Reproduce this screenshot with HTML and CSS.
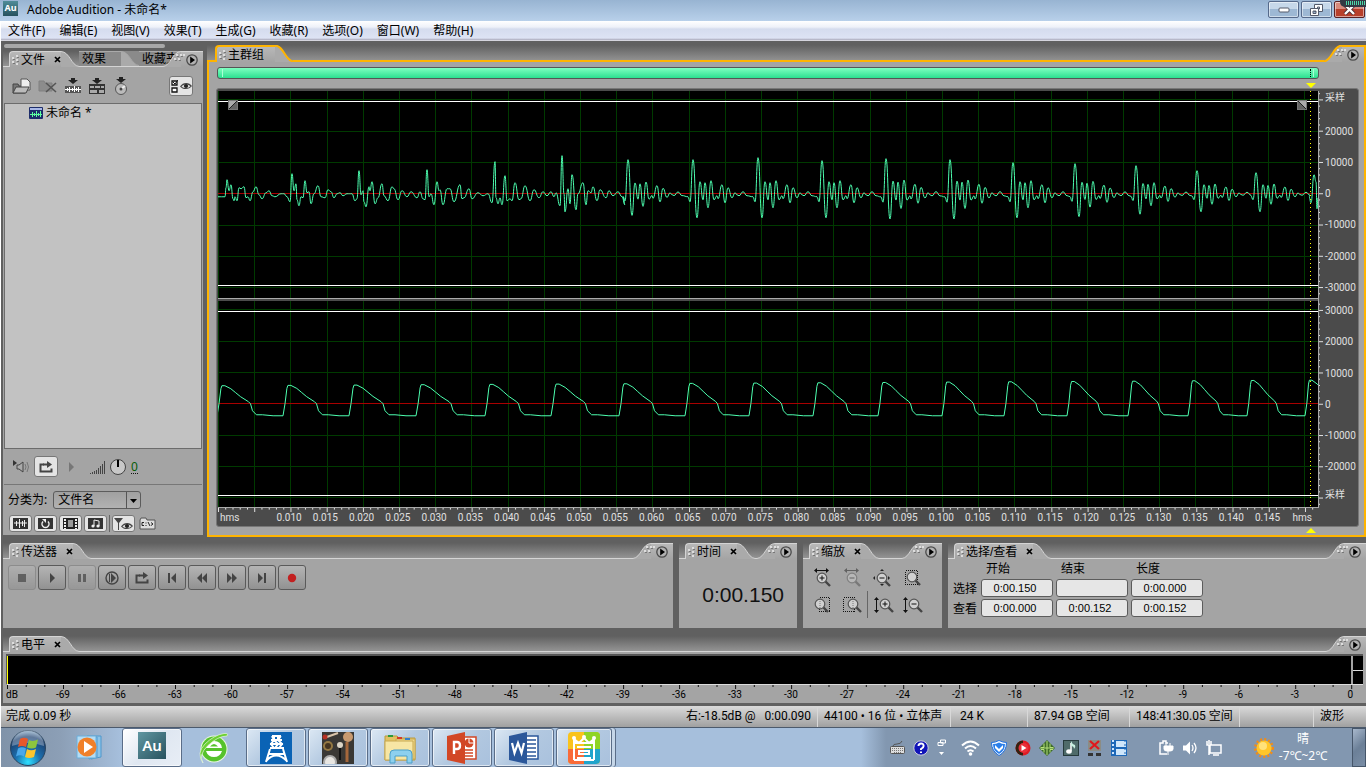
FILE: index.html
```html
<!DOCTYPE html>
<html lang="zh-CN">
<head>
    <meta charset="UTF-8">
    <meta name="viewport" content="width=device-width, initial-scale=1.0">
    <title>Adobe Audition - 未命名*</title>
    <link rel="stylesheet" href="styles.css">
</head>
<body>
    <!-- Shared icons -->
    <svg class="sprite" aria-hidden="true">
        <symbol id="grip" viewBox="0 0 7 12">
            <path d="M0 3h2v2h-2zM0 7h2v2h-2zM4 1h2v2h-2zM4 5h2v2h-2zM4 9h2v2h-2z" fill="#ddd"/>
            <path d="M1 5h2v1h-2zM1 9h2v1h-2zM5 3h2v1h-2zM5 7h2v1h-2z" fill="#777"/>
        </symbol>
        <symbol id="grip-wide" viewBox="0 0 12 7">
            <path d="M3 0h2v2h-2zM7 0h2v2h-2zM1 4h2v2h-2zM5 4h2v2h-2zM10 0h2v2h-2z" fill="#ddd"/>
            <path d="M4 2h2v1h-2zM8 2h2v1h-2zM2 6h2v1h-2zM6 6h2v1h-2z" fill="#777"/>
        </symbol>
        <symbol id="panel-menu" viewBox="0 0 12 12">
            <circle cx="6" cy="6" r="5.2" fill="#b2b2b2" stroke="#4b4b4b" stroke-width="1.3"/>
            <path d="M4.2 2.6L9 6L4.2 9.4z" fill="#000"/>
        </symbol>
        <symbol id="slope" viewBox="0 0 18 17" preserveAspectRatio="none">
            <path class="slope-fill" d="M0 0.5C9 1 10 15.5 18 16.5V17H0z"/>
            <path class="slope-line" d="M0 0.5C9 1 10 15.5 18 16.5"/>
        </symbol>
        <symbol id="close" viewBox="0 0 7 7">
            <path d="M1 1L6 6M6 1L1 6" stroke="#000" stroke-width="1.7"/>
        </symbol>
        <symbol id="eye" viewBox="0 0 12 8">
            <path d="M0 4.5C3 0 9 0 12 4C9 8 3 8 0 4.5z" fill="#444"/>
            <path d="M1.5 4.5C4 2 8 2 10.5 4.2C8 6.6 4 6.6 1.5 4.5z" fill="#ddd"/>
            <circle cx="6" cy="4" r="2.1" fill="#222"/>
        </symbol>
        <symbol id="loop" viewBox="0 0 14 12">
            <path d="M5 3.5H1.5V10.5H12.5V7.5" fill="none" stroke="currentColor" stroke-width="2"/>
            <path d="M4 3.5H9" stroke="currentColor" stroke-width="2"/>
            <path d="M8 0L13 3.5L8 7z" fill="currentColor"/>
        </symbol>
        <symbol id="lens" viewBox="0 0 16 16">
            <path d="M10 10L15 15" stroke="#444" stroke-width="2.4"/>
            <circle cx="7" cy="7" r="4.8" fill="#d0d0d0" stroke="#555" stroke-width="1.2"/>
        </symbol>
    </svg>

    <!-- Right end of every panel header -->
    <template id="head-end">
        <svg class="slope flip"><use href="#slope"/></svg>
        <span class="corner"><svg class="grip-wide"><use href="#grip-wide"/></svg><button aria-label="面板菜单"><svg class="menu-dot"><use href="#panel-menu"/></svg></button></span>
    </template>

    <!-- Title Bar -->
    <header class="titlebar">
        <span class="app-icon">Au</span>
        <h1>Adobe Audition - 未命名*</h1>
        <div class="window-buttons">
            <button aria-label="最小化"><svg width="12" height="6" viewBox="0 0 12 6"><rect x="1" y="1" width="10" height="4" rx="1" fill="#fff" stroke="#555b6b"/></svg></button>
            <button aria-label="还原"><svg width="13" height="12" viewBox="0 0 13 12"><g fill="#fff" stroke="#555b6b"><path d="M4.500 .5h8v7h-8zM7.500 3v2h2v-2z"/><path d="M.5 4.500h8v7h-8zM3 7v2.500h3V7z" fill-rule="evenodd"/></g></svg></button>
            <button class="close-window" aria-label="关闭"><svg width="13" height="11" viewBox="0 0 13 11"><path d="M2 1L11 10M11 1L2 10" stroke="#503038" stroke-width="4"/><path d="M2 1L11 10M11 1L2 10" stroke="#fff" stroke-width="2.400"/></svg></button>
        </div>
        <div class="meter-overlay"></div>
    </header>

    <!-- Menu -->
    <nav class="menubar">
        <a href="#">文件(F)</a>
        <a href="#">编辑(E)</a>
        <a href="#">视图(V)</a>
        <a href="#">效果(T)</a>
        <a href="#">生成(G)</a>
        <a href="#">收藏(R)</a>
        <a href="#">选项(O)</a>
        <a href="#">窗口(W)</a>
        <a href="#">帮助(H)</a>
    </nav>

    <main class="workspace">
        <div class="upper">
            <!-- Files Panel -->
            <section class="files">
                <div class="tab-scroll"></div>
                <div class="panel-head">
                    <span class="lead"></span>
                    <span class="tab"><svg class="grip"><use href="#grip"/></svg>文件<svg class="close"><use href="#close"/></svg></span>
                    <svg class="slope"><use href="#slope"/></svg>
                    <span class="tab back">效果</span>
                    <svg class="slope back"><use href="#slope"/></svg>
                    <span class="tab back cut">收藏夹</span>
                </div>
                <div class="panel-body">
                    <div class="file-tools">
                        <button aria-label="导入文件"><svg width="20" height="18" viewBox="0 0 20 18"><path d="M1 16V7h5l1 2h6v7z" fill="#777" stroke="#444"/><path d="M9 2h6l3 3v8H9z" fill="#eee" stroke="#555"/><path d="M1 16l3-6h13l-3 6z" fill="#bbb" stroke="#444"/></svg></button>
                        <button aria-label="关闭文件"><svg width="20" height="18" viewBox="0 0 20 18"><path d="M1 14V4h5l1 2h7v8z" fill="#8c8c8c" stroke="#808080"/><path d="M8 6L18 15M18 6L8 15" stroke="#555" stroke-width="1.600"/></svg></button>
                        <button aria-label="插入到多轨"><svg width="18" height="18" viewBox="0 0 18 18"><path d="M7 1h4v2h3l-5 4-5-4h3z" fill="#222"/><path d="M1 9h16v7H1z" fill="#555"/><path d="M1 12.500h16M3.500 11v3M5.500 10v5M8.500 11v3M10.500 9v6M12.500 11v3M14.500 10v5" stroke="#fff" fill="none"/></svg></button>
                        <button aria-label="插入到 CD"><svg width="18" height="18" viewBox="0 0 18 18"><path d="M7 1h4v2h3l-5 4-5-4h3z" fill="#222"/><rect x="1" y="7" width="16" height="10" fill="#333"/><path d="M2 9h4v2h-4zM7 9h5v2h-5zM13 9h3v2h-3zM2 13h7v3h-7zM11 13h5v3h-5z" fill="#aaa"/></svg></button>
                        <button aria-label="刻录"><svg width="18" height="18" viewBox="0 0 18 18"><circle cx="9" cy="12" r="5.500" fill="#bbb" stroke="#555"/><path d="M9 12l4-3" stroke="#eee" stroke-width="2"/><circle cx="9" cy="12" r="1.500" fill="#444"/><path d="M7 0h4v2h3l-5 4-5-4h3z" fill="#222"/></svg></button>
                        <button class="lit options" aria-label="高级选项"><svg width="7" height="15" viewBox="0 0 7 15"><path d="M1 2h5v4h-5zM1 9h5v4h-5z" fill="#fff" stroke="#111" stroke-width="1.300"/><path d="M2 3l2 2 3-4" stroke="#111" fill="none"/></svg><svg width="12" height="8"><use href="#eye"/></svg></button>
                    </div>
                    <ul class="file-list">
                        <li><svg width="14" height="12" viewBox="0 0 14 12"><rect width="14" height="12" rx="1" fill="#1d2d6a"/><rect x="1" y="1" width="12" height="2" fill="#a8b8e8"/><path d="M1 7.500h12M3.500 5v5M5.500 6v3M7.500 4v6M9.500 6v3M11.500 4v6" stroke="#5dffa0" fill="none"/></svg>未命名 *</li>
                    </ul>
                    <div class="preview">
                        <button aria-label="播放"><svg width="18" height="14" viewBox="0 0 18 14"><path d="M1 0v6l4-3z" fill="#333"/><path d="M5 5h2l4-3v10l-4-3h-2z" fill="#aaa" stroke="#444"/><path d="M13 4q2 3 0 6M15 2q3 5 0 10" fill="none" stroke="#777"/></svg></button>
                        <button class="lit" aria-label="循环播放"><svg width="14" height="12"><use href="#loop"/></svg></button>
                        <svg class="dim-play" width="7" height="10" viewBox="0 0 7 10"><path d="M1 0L6 5L1 10z" fill="#777"/></svg>
                        <svg width="16" height="14" viewBox="0 0 16 14"><path d="M1.500 14v-1M3.500 14v-2M5.500 14v-3M7.500 14v-4M9.500 14v-6M11.500 14v-8M13.500 14v-10M15.500 14v-13" stroke="#444" shape-rendering="crispEdges"/></svg>
                        <svg width="18" height="18" viewBox="0 0 18 18"><circle cx="9" cy="9" r="7.500" fill="#c8c8c8" stroke="#444"/><path d="M9 2v7" stroke="#000" stroke-width="2"/></svg>
                        <a class="volume" href="#">0</a>
                    </div>
                    <div class="sort">
                        <label for="sort-by">分类为:</label>
                        <div class="select-box">
                            <select id="sort-by"><option>文件名</option></select>
                            <svg width="14" height="17" viewBox="0 0 14 17"><path d="M.5 0v17" stroke="#555"/><path d="M4 7h7l-3.500 4z" fill="#000"/></svg>
                        </div>
                    </div>
                    <div class="filters">
                        <button class="lit" aria-label="音频"><svg width="15" height="11" viewBox="0 0 15 11"><rect width="15" height="11" fill="#333"/><path d="M1 5h13M3.500 3v5M6.500 1v9M9.500 3v5M11.500 2v7" stroke="#eee"/></svg></button>
                        <button class="lit" aria-label="循环"><svg width="15" height="11" viewBox="0 0 15 11"><rect width="15" height="11" fill="#333"/><path d="M5 3.500a3.500 3.500 0 1 0 5 0" fill="none" stroke="#eee" stroke-width="1.500"/><path d="M4 1h4v4z" fill="#eee"/></svg></button>
                        <button class="lit" aria-label="视频"><svg width="15" height="11" viewBox="0 0 15 11"><rect width="15" height="11" fill="#222"/><rect x="5" y="2" width="5" height="7" fill="#999"/><path d="M2 1v10M13 1v10" stroke="#eee" stroke-width="2" stroke-dasharray="2 1"/></svg></button>
                        <button class="lit" aria-label="MIDI"><svg width="15" height="11" viewBox="0 0 15 11"><rect width="15" height="11" fill="#333"/><path d="M6 8V2l5 1v5" fill="none" stroke="#eee"/><circle cx="5" cy="8" r="1.600" fill="#eee"/><circle cx="10" cy="8" r="1.600" fill="#eee"/></svg></button>
                        <span class="divider"></span>
                        <button class="lit" aria-label="显示"><svg width="19" height="14" viewBox="0 0 19 14"><path d="M0 1h9l-4 5v7h-1v-7z" fill="#444"/><use href="#eye" x="7" y="5" width="12" height="8"/></svg></button>
                        <button class="path-button" aria-label="完整路径"><svg width="17" height="13" viewBox="0 0 17 13"><path d="M1 12V3l1-2h5l1 2h8v9z" fill="#ddd" stroke="#555"/><path d="M5 5.500h-2v3h2M7 5.500v1M7 8v1M9 5l2 4M12 5.500l2 1.500-2 1.500" stroke="#222" fill="none"/></svg></button>
                    </div>
                </div>
            </section>

            <!-- Main Panel -->
            <section class="main-panel">
                <div class="panel-head">
                    <span class="lead"></span>
                    <span class="tab"><svg class="grip"><use href="#grip"/></svg>主群组</span>
                    <svg class="slope"><use href="#slope"/></svg>
                    <span class="filler"></span>
                </div>
                <div class="panel-body">
                    <div class="view-bar"><span></span><span class="end"></span></div>
                    <div class="playhead-row"><svg width="10" height="5" viewBox="0 0 10 5"><path d="M0 0h10l-5 5z" fill="#ff0"/></svg></div>
                    <div class="display">
                        <div class="channels">
                            <div class="channel">
                                <svg id="wave-left" viewBox="0 0 1100 206" preserveAspectRatio="none"></svg>
                                <svg class="fade in" width="10" height="10" viewBox="0 0 10 10"><rect x=".5" y=".5" width="9" height="9" fill="#666" stroke="#777"/><path d="M1 1h8l-8 8z" fill="#aaa"/><path d="M1 9l8-8" stroke="#222"/></svg>
                                <svg class="fade out" width="10" height="10" viewBox="0 0 10 10"><rect x=".5" y=".5" width="9" height="9" fill="#666" stroke="#777"/><path d="M1 1h8v8z" fill="#aaa"/><path d="M1 1l8 8" stroke="#222"/></svg>
                            </div>
                            <div class="channel">
                                <svg id="wave-right" viewBox="0 0 1100 206" preserveAspectRatio="none"></svg>
                            </div>
                        </div>
                        <div class="amplitude">
                            <svg id="amp-ticks" viewBox="0 0 6 416" preserveAspectRatio="none"></svg>
                            <div class="amp-labels" id="amp-labels"></div>
                        </div>
                        <div class="time-ruler">
                            <svg id="time-ticks" viewBox="0 0 1100 5" preserveAspectRatio="none"></svg>
                            <div class="time-labels" id="time-labels"></div>
                        </div>
                    </div>
                    <div class="playhead-row"><svg width="10" height="5" viewBox="0 0 10 5"><path d="M0 5h10l-5-5z" fill="#ff0"/></svg></div>
                </div>
            </section>
        </div>

        <div class="lower">
            <!-- Transport -->
            <section class="transport">
                <div class="panel-head">
                    <span class="lead"></span>
                    <span class="tab"><svg class="grip"><use href="#grip"/></svg>传送器<svg class="close"><use href="#close"/></svg></span>
                    <svg class="slope"><use href="#slope"/></svg>
                    <span class="filler"></span>
                </div>
                <div class="panel-body transport-buttons">
                    <button disabled aria-label="停止"><svg viewBox="0 0 16 14"><path d="M4 3h8v8h-8z"/></svg></button>
                    <button aria-label="播放"><svg viewBox="0 0 16 14"><path d="M6 2l5 5-5 5z"/></svg></button>
                    <button disabled aria-label="暂停"><svg viewBox="0 0 16 14"><path d="M4 3h3v8h-3zM9 3h3v8h-3z"/></svg></button>
                    <button aria-label="播放到结尾"><svg viewBox="0 0 16 14"><circle cx="8" cy="7" r="6" fill="none" stroke="#444" stroke-width="1.400"/><path d="M5 3h1v8h-1zM7 2l5 5-5 5z"/></svg></button>
                    <button aria-label="循环播放"><svg viewBox="0 0 16 14"><use href="#loop" x="1" y="1" width="14" height="12"/></svg></button>
                    <button aria-label="到开头"><svg viewBox="0 0 16 14"><path d="M4 2h2v10h-2zM12 2v10l-5-5z"/></svg></button>
                    <button aria-label="倒放"><svg viewBox="0 0 16 14"><path d="M8 2v10l-5-5zM13 2v10l-5-5z"/></svg></button>
                    <button aria-label="快进"><svg viewBox="0 0 16 14"><path d="M3 2v10l5-5zM8 2v10l5-5z"/></svg></button>
                    <button aria-label="到结尾"><svg viewBox="0 0 16 14"><path d="M4 2v10l5-5zM10 2h2v10h-2z"/></svg></button>
                    <button class="record" aria-label="录音"><svg viewBox="0 0 16 14"><circle cx="8" cy="7" r="4.200"/></svg></button>
                </div>
            </section>

            <!-- Time -->
            <section class="time">
                <div class="panel-head">
                    <span class="lead"></span>
                    <span class="tab"><svg class="grip"><use href="#grip"/></svg>时间<svg class="close"><use href="#close"/></svg></span>
                    <svg class="slope"><use href="#slope"/></svg>
                    <span class="filler"></span>
                </div>
                <div class="panel-body clock">0:00.150</div>
            </section>

            <!-- Zoom -->
            <section class="zoom">
                <div class="panel-head">
                    <span class="lead"></span>
                    <span class="tab"><svg class="grip"><use href="#grip"/></svg>缩放<svg class="close"><use href="#close"/></svg></span>
                    <svg class="slope"><use href="#slope"/></svg>
                    <span class="filler"></span>
                </div>
                <div class="panel-body zoom-buttons">
                    <button aria-label="水平放大"><svg viewBox="0 0 18 18"><use href="#lens" x="2" y="2" width="16" height="16"/><path d="M6.500 9h5M9 6.500v5" stroke="#111"/><path d="M2 1.500h13" stroke="#111"/><path d="M4 -1v5l-3-2.500zM13 -1v5l3-2.500z" fill="#111"/></svg></button>
                    <button disabled aria-label="水平缩小"><svg viewBox="0 0 18 18"><use href="#lens" x="2" y="2" width="16" height="16"/><path d="M6.500 9h5" stroke="#111"/><path d="M2 1.500h13" stroke="#111"/><path d="M4 -1v5l-3-2.500zM13 -1v5l3-2.500z" fill="#111"/></svg></button>
                    <button aria-label="全部缩小"><svg viewBox="0 0 18 18"><use href="#lens" x="2" y="2" width="16" height="16"/><path d="M6.500 9h5" stroke="#111"/><path d="M7 2l2-2 2 2zM7 15l2 2 2-2zM2 7l-2 2 2 2zM15 7l2 2-2 2z" fill="#222"/></svg></button>
                    <button aria-label="缩放到选区"><svg viewBox="0 0 18 18"><rect x="2.500" y="1.500" width="12" height="14" fill="none" stroke="#111" stroke-dasharray="1 1" shape-rendering="crispEdges"/><use href="#lens" x="2" y="1" width="16" height="16"/></svg></button>
                    <button aria-label="缩放到选区左侧"><svg viewBox="0 0 18 18"><rect x="6.500" y="1.500" width="10" height="14" fill="none" stroke="#111" stroke-dasharray="1 1" shape-rendering="crispEdges"/><use href="#lens" x="0" y="1" width="16" height="16"/><path d="M7 5v7" stroke="#777" stroke-dasharray="1 1"/></svg></button>
                    <button aria-label="缩放到选区右侧"><svg viewBox="0 0 18 18"><rect x="0.500" y="1.500" width="11" height="14" fill="none" stroke="#111" stroke-dasharray="1 1" shape-rendering="crispEdges"/><use href="#lens" x="3" y="1" width="16" height="16"/><path d="M10 5v7" stroke="#777" stroke-dasharray="1 1"/></svg></button>
                    <button class="split" aria-label="垂直放大"><svg viewBox="0 0 18 18"><use href="#lens" x="4" y="1" width="16" height="16"/><path d="M8.500 8h5M11 5.500v5M2.500 3v12" stroke="#111"/><path d="M0 4l2.500-3L5 4zM0 14l2.500 3L5 14z" fill="#111"/></svg></button>
                    <button class="wide" aria-label="垂直缩小"><svg viewBox="0 0 18 18"><use href="#lens" x="4" y="1" width="16" height="16"/><path d="M8.500 8h5M2.500 3v12" stroke="#111"/><path d="M0 4l2.500-3L5 4zM0 14l2.500 3L5 14z" fill="#111"/></svg></button>
                </div>
            </section>

            <!-- Selection / View -->
            <section class="selection">
                <div class="panel-head">
                    <span class="lead"></span>
                    <span class="tab"><svg class="grip"><use href="#grip"/></svg>选择/查看<svg class="close"><use href="#close"/></svg></span>
                    <svg class="slope"><use href="#slope"/></svg>
                    <span class="filler"></span>
                </div>
                <div class="panel-body">
                    <table>
                        <tr><td></td><th id="c1">开始</th><th id="c2">结束</th><th id="c3">长度</th></tr>
                        <tr><th id="r1">选择</th><td><input aria-labelledby="r1 c1" value="0:00.150"></td><td><input aria-labelledby="r1 c2" value=""></td><td><input aria-labelledby="r1 c3" value="0:00.000"></td></tr>
                        <tr><th id="r2">查看</th><td><input aria-labelledby="r2 c1" value="0:00.000"></td><td><input aria-labelledby="r2 c2" value="0:00.152"></td><td><input aria-labelledby="r2 c3" value="0:00.152"></td></tr>
                    </table>
                </div>
            </section>
        </div>

        <!-- Levels -->
        <section class="levels">
            <div class="panel-head">
                <span class="lead"></span>
                <span class="tab"><svg class="grip"><use href="#grip"/></svg>电平<svg class="close"><use href="#close"/></svg></span>
                <svg class="slope"><use href="#slope"/></svg>
                <span class="filler"></span>
            </div>
            <div class="panel-body">
                <div class="meter"><div class="bars"></div><div class="clip"><span></span><span></span></div></div>
                <svg id="db-ticks" viewBox="0 0 1357 4" preserveAspectRatio="none"></svg>
                <div class="db-labels" id="db-labels"></div>
            </div>
        </section>
    </main>

    <!-- Status Bar -->
    <footer class="statusbar">
        <span class="done">完成 0.09 秒</span>
        <span class="level">右:-18.5dB @ &nbsp; 0:00.090</span>
        <span class="format">44100 • 16 位 • 立体声</span>
        <span class="size">24 K</span>
        <span class="space">87.94 GB 空间</span>
        <span class="remain">148:41:30.05 空间</span>
        <span class="empty"></span>
        <span class="mode">波形</span>
    </footer>

    <!-- Taskbar -->
    <div class="taskbar">
        <button class="start" aria-label="开始"><svg width="38" height="38" viewBox="0 0 38 38"><defs><radialGradient id="orb" cx=".5" cy=".9" r=".9"><stop offset="0" stop-color="#2fe0ff"/><stop offset=".4" stop-color="#1b6fae"/><stop offset=".8" stop-color="#1c3f6e"/><stop offset="1" stop-color="#8fb0cc"/></radialGradient></defs><circle cx="19" cy="19" r="17.500" fill="url(#orb)" stroke="#2a4560"/><path d="M3 17a16 16 0 0 1 32 0q-16-6-32 0z" fill="#fff" opacity=".3"/><path d="M11 10q4-2.500 8 0l-2 8q-4-2-8 0z" fill="#e8582a"/><path d="M20 11q4 2 9-.5l-2 8q-4 2-9 0z" fill="#8cc63e"/><path d="M9 19.500q4-2.500 8 0l-2 8q-4-2.500-8 0z" fill="#4aa8ea"/><path d="M18 20q4 2.500 9 0l-2 8q-5 2-9 0z" fill="#fbc52d"/></svg></button>
        <button aria-label="媒体播放器"><svg width="30" height="28" viewBox="0 0 30 28"><path d="M12 2h14v21l-10 2zM8 3h14v20l-8 2z" fill="#8cc4ea" stroke="#4e98cc"/><path d="M2 2h19v22H2z" fill="#b4dcf4" stroke="#6aaedb"/><circle cx="12" cy="13" r="9.500" fill="#f0802a"/><path d="M9 7l9 6-9 6z" fill="#fff"/></svg></button>
        <button class="running active" aria-label="Adobe Audition"><span class="au">Au</span></button>
        <button aria-label="浏览器"><svg width="32" height="32" viewBox="0 0 32 32"><circle cx="16" cy="17" r="13.500" fill="#e8f6e0"/><circle cx="16" cy="17" r="12.500" fill="#56c22c"/><path d="M8 16q1-7 8-7t8 7zM8 19h16q-2 6-8 6t-8-6" fill="#fff"/><path d="M12 14.500q4-5 8 0z" fill="#56c22c"/><path d="M5 31q-5-8 5-17.500T29 4q2-3-3-2.500Q16 3 7 12T5 31z" fill="#6cd033" stroke="#e8f6e0" stroke-width=".7"/></svg></button>
        <button class="running" aria-label="磁力塔"><svg width="32" height="32" viewBox="0 0 32 32"><rect width="32" height="32" fill="#0a63b5"/><path d="M12 4h9M11 8h11M10 12h13M10 16h14M12 4l2 4-3 4 3 4M21 4l-3 4 4 4-3 4M14 8l4 4-3 4M14 4v4M18 4v4M10 17l-4 13M23 17l4 13M6 29q10-11 21 0M9 22h16" fill="none" stroke="#fff" stroke-width="2"/></svg></button>
        <button class="running" aria-label="图片"><svg width="32" height="32" viewBox="0 0 32 32"><rect width="32" height="32" fill="#3a3835"/><path d="M2 6l14-5" stroke="#d9c4aa" stroke-width="2"/><circle cx="3" cy="5" r="2.500" fill="#b53024"/><circle cx="26" cy="5" r="5" fill="#c89a70"/><path d="M25 10v20" stroke="#a5673b" stroke-width="3"/><circle cx="6" cy="14" r="5" fill="#947842"/><circle cx="6" cy="14" r="3" fill="#443420"/><circle cx="18" cy="13" r="3" fill="#dcd5c6"/><path d="M18 16v12" stroke="#111" stroke-width="2"/><circle cx="8" cy="30" r="7" fill="#aaa"/><circle cx="8" cy="30" r="5" fill="#e8e6e2"/></svg></button>
        <button class="running" aria-label="资源管理器"><svg width="34" height="32" viewBox="0 0 34 32"><path d="M2 4h12l2 2h16v22H2z" fill="#e2c263" stroke="#b99a3e"/><path d="M13 7h19v20H13z" fill="#efd88a" stroke="#c8a850"/><path d="M2 9h28v19H2z" fill="#f7e6a4" stroke="#c8a850"/><path d="M5 3h5v2h-5z" fill="#2c9a3a"/><path d="M14 5h5v2h-5z" fill="#d33a28"/><path d="M22 6h5v2h-5z" fill="#3380cc"/><path d="M7 31v-9q0-4 4-4h14q4 0 4 4v9h-5v-7H12v7z" fill="#8dd0ee" stroke="#4b9fc8"/></svg></button>
        <button class="running" aria-label="PowerPoint"><svg width="32" height="32" viewBox="0 0 32 32"><path d="M16 5h14v22H16z" fill="#fff" stroke="#d24726" stroke-width="1.500"/><path d="M18 18h9M18 21h9M18 24h9" stroke="#d24726" stroke-width="1.500"/><circle cx="23" cy="11" r="4.500" fill="#d24726"/><path d="M23 11V6M23 11h5" stroke="#fff"/><path d="M1 4l18-4v32L1 28z" fill="#d24726"/><path d="M8 22V10h3q3 0 3 3.500T11 17H8" fill="none" stroke="#fff" stroke-width="2.400"/></svg></button>
        <button class="running" aria-label="Word"><svg width="32" height="32" viewBox="0 0 32 32"><path d="M16 4h14v23H16z" fill="#fff" stroke="#2b579a" stroke-width="1.500"/><path d="M18 8h10M18 12h10M18 16h10M18 20h10M18 24h10" stroke="#2b579a" stroke-width="1.500"/><path d="M1 4l18-4v32L1 28z" fill="#2b579a"/><path d="M4 11l2.500 10L10 11l3.500 10L16 11" fill="none" stroke="#fff" stroke-width="2.200"/></svg></button>
        <button class="running stack" aria-label="管理"><svg width="32" height="32" viewBox="0 0 32 32"><rect width="32" height="32" rx="4" fill="#f9c31c"/><path d="M16 0h12q4 0 4 4v13H16z" fill="#8fd426"/><path d="M16 17h16v11q0 4-4 4H16z" fill="#1fa4cc"/><path d="M0 17h16v15H4q-4 0-4-4z" fill="#f96a38"/><path d="M6 28V7l5 4 5-5 5 5 5-4v21M6 11h20M9 15h14M11 19h10v3H11zM9 26h14M6 28h20" fill="none" stroke="#fff" stroke-width="2"/><circle cx="6" cy="6" r="2" fill="#fff"/><circle cx="16" cy="5" r="2" fill="#fff"/><circle cx="26" cy="6" r="2" fill="#fff"/></svg></button>
        <span class="spacer"></span>
        <div class="tray">
            <svg width="15" height="14" viewBox="0 0 15 14"><rect x=".5" y="5.500" width="14" height="7" rx="1" fill="#ddd" stroke="#555"/><path d="M2 7.500h11M2 9.500h11M4 11.500h7" stroke="#777" stroke-dasharray="1 1"/><path d="M3 5q0-2 4-2t5-3" fill="none" stroke="#555"/></svg>
            <svg width="16" height="16" viewBox="0 0 16 16"><circle cx="8" cy="8" r="7.200" fill="#1014b8" stroke="#ccd"/><path d="M5.500 6q0-2.500 2.600-2.500T10.600 6q0 1.500-2.600 3v1M8 11.500v1.500" stroke="#fff" stroke-width="2" fill="none"/></svg>
            <svg width="9" height="17" viewBox="0 0 9 17"><path d="M3.500 1h5v3h-5zM1 3.500h5v3H1z" fill="#8398b1" stroke="#fff"/><path d="M2 13h5l-2.500 3z" fill="#fff"/></svg>
            <svg class="wifi" width="19" height="16" viewBox="0 0 19 16"><g fill="none" stroke="#fff" stroke-width="2"><path d="M1 5.500q8.500-8 17 0M4 8.500q5.500-5 11 0M6.500 11.500q3-2.500 6 0"/></g><circle cx="9.500" cy="14" r="1.800" fill="#fff"/></svg>
            <svg width="16" height="16" viewBox="0 0 16 16"><path d="M8 .5q4 2 7.500 2 0 9-7.500 13Q.5 11 .5 2.500q4 0 7.500-2z" fill="#fff" stroke="#1d6fe0"/><path d="M8 2.500q3 1.500 6 1.500 0 7-6 10-6-3-6-10 3 0 6-1.500z" fill="#2b7fea"/><path d="M4 5l4 4 4-4v3l-4 4-4-4z" fill="#fff"/></svg>
            <svg width="16" height="16" viewBox="0 0 16 16"><circle cx="8" cy="8" r="7.500" fill="#e01c24"/><path d="M8 .5a7.500 7.500 0 0 0 0 15" fill="#321"/><circle cx="8.500" cy="8" r="5" fill="#e8303a"/><path d="M6.500 5l5 3-5 3z" fill="#fff"/></svg>
            <svg width="16" height="16" viewBox="0 0 16 16"><path d="M8 0l8 8-8 8-8-8z" fill="#3d6a28"/><path d="M8 1v14M1 8h14M5 3.500v4h-3M11 3.500v4h3M5 12.500v-3h-3M11 12.500v-3h3" stroke="#b6e27a" fill="none"/></svg>
            <svg width="16" height="16" viewBox="0 0 16 16"><rect x=".5" y=".5" width="15" height="15" fill="#4f6b6a" stroke="#263a3c"/><path d="M8 3v8" stroke="#fff" stroke-width="1.500"/><path d="M8 1q1 3 4 4 1 2-1 4 0-3-3-3z" fill="#c8f0e0"/><ellipse cx="6" cy="11.500" rx="2.800" ry="2.200" fill="#fff"/></svg>
            <svg width="16" height="16" viewBox="0 0 16 16"><rect x="1" width="13" height="11" fill="#8c8c84"/><path d="M3 1l9 8M12 1l-9 8" stroke="#e0181c" stroke-width="2.200"/><path d="M1 13h5v3H1zM9 13h5v3H9z" fill="#333"/></svg>
            <svg width="16" height="16" viewBox="0 0 16 16"><rect width="16" height="16" fill="#1d68b8"/><path d="M2 0v16" stroke="#cfe6ff" stroke-width="2" stroke-dasharray="2 2"/><path d="M5 1h10v6H5zM5 9h10v6H5z" fill="#cfe6fa"/><path d="M14 0v16" stroke="#1d68b8" stroke-width="1" stroke-dasharray="2 2"/></svg>
            <svg class="power" width="16" height="16" viewBox="0 0 16 16"><path d="M9 14H2V3h3V1h3v2h2" fill="none" stroke="#fff" stroke-width="1.500"/><path d="M6 6h9v3q0 2-3 2H9Q6 11 6 9zM8 3v3M12 3v3M10 11v4" fill="#fff" stroke="#fff"/></svg>
            <svg width="16" height="16" viewBox="0 0 16 16"><path d="M1 5.500h3l4-4v13l-4-4H1z" fill="#fff"/><path d="M10 5q2 3 0 6M12 3q4 5 0 10" stroke="#fff" fill="none" stroke-width="1.300"/></svg>
            <svg width="16" height="16" viewBox="0 0 16 16"><path d="M4 5h11v8H4zM7 15h6M3 0v4M1 1v4h4v-4M3 5v10" fill="none" stroke="#fff" stroke-width="1.500"/></svg>
            <svg class="sun" width="20" height="20" viewBox="0 0 20 20"><circle cx="10" cy="10" r="8.500" fill="none" stroke="#f08c18" stroke-width="3" stroke-dasharray="2 2"/><circle cx="10" cy="10" r="7.500" fill="#ffc629"/><circle cx="9" cy="8" r="4" fill="#ffe27a"/></svg>
            <div class="weather"><span>晴</span><span>-7℃~2℃</span></div>
        </div>
        <button class="show-desktop" aria-label="显示桌面"></button>
    </div>

    <script src="script.js"></script>
</body>
</html>
```
FILE: styles.css
```css
/* General Reset */
* {
    margin: 0;
    padding: 0;
    box-sizing: border-box;
}

body {
    display: flex;
    flex-direction: column;
    height: 100vh;
    padding: 0 0 1px 1px;
    background: #fff;
    color: #000;
    font: 12px/14px "Noto Sans", "Noto Sans CJK SC", sans-serif;
    overflow: hidden;
}

button {
    display: flex;
    align-items: center;
    justify-content: center;
    background: none;
    border: none;
    font: inherit;
}

svg {
    display: block;
    flex-shrink: 0;
}

a {
    color: inherit;
    text-decoration: none;
}

.sprite {
    position: absolute;
    width: 0;
    height: 0;
}

/* Title Bar */
.titlebar {
    position: relative;
    display: flex;
    height: 21px;
    margin-left: -1px;
    padding-left: 3px;
    background: linear-gradient(#98b4d2, #b8d0ea);
    flex-shrink: 0;
}

.app-icon {
    width: 15px;
    height: 15px;
    margin: 1px 9px 0 0;
    background: linear-gradient(#4f8c98, #28525e);
    color: #fff;
    font-size: 9px;
    font-weight: bold;
    line-height: 14px;
    text-align: center;
}

.titlebar h1 {
    flex: 1;
    font-size: 12px;
    font-weight: normal;
    line-height: 19px;
}

.window-buttons {
    display: flex;
    gap: 2px;
    padding: 1px 1px 0 0;
}

.window-buttons button {
    width: 31px;
    height: 17px;
    border: 1px solid #55698a;
    border-radius: 2px;
    background: linear-gradient(#c6d8ea 50%, #9db8d4 50%);
    box-shadow: inset 0 0 0 1px rgba(255, 255, 255, 0.5);
}

.window-buttons .close-window {
    border-color: #5a2024;
    background: linear-gradient(#d88a7c 50%, #b8402c 50%);
}

.meter-overlay {
    position: absolute;
    top: 0;
    right: 0;
    width: 26px;
    height: 7px;
    border: solid #333a44;
    border-width: 1px 0 2px 6px;
    border-radius: 0 0 0 5px;
    background: repeating-linear-gradient(90deg, #4dd8a8 0 1px, #333a44 1px 2px);
}

/* Menu */
.menubar {
    display: flex;
    gap: 14px;
    height: 20px;
    padding-left: 7px;
    background: linear-gradient(#fff 0, #eef1f9 6px, #d5dcee 8px, #dde3f4 17px, #aab 19px, #fff 20px);
    line-height: 19px;
    flex-shrink: 0;
}

/* Workspace */
.workspace {
    display: flex;
    flex: 1;
    flex-direction: column;
    min-height: 0;
    padding-left: 2px;
    background: #606060;
}

.upper {
    display: flex;
    flex: 1;
    gap: 4px;
    min-height: 0;
}

section {
    --edge: #d4d4d4;
    --edge-width: 1px;
    display: flex;
    flex-direction: column;
}

.panel-head {
    display: flex;
    height: 16px;
    background: linear-gradient(#606060, #979797);
    flex-shrink: 0;
}

.panel-body {
    flex: 1;
    background: #a4a4a4;
}

.lead,
.filler {
    border-bottom: var(--edge-width) solid var(--edge);
}

.lead {
    width: 6px;
}

.filler {
    flex: 1;
}

.tab {
    display: flex;
    align-items: center;
    border: solid var(--edge);
    border-width: var(--edge-width) 0 0 var(--edge-width);
    border-top-left-radius: 4px;
    background: linear-gradient(#b8b8b8, #a4a4a4);
    font-family: "Liberation Sans", "Noto Sans CJK SC", sans-serif;
    white-space: nowrap;
}

.grip {
    width: 7px;
    height: 12px;
    margin: 0 2px;
}

.grip-wide {
    width: 12px;
    height: 7px;
}

.close {
    width: 7px;
    height: 7px;
    margin: 0 0 0 9px;
}

.slope {
    width: 18px;
    height: 100%;
}

.slope-fill {
    fill: #aaa;
}

.slope-line {
    fill: none;
    stroke: var(--edge);
    stroke-width: var(--edge-width);
}

.slope.flip {
    transform: scaleX(-1);
}

.corner {
    position: relative;
    display: flex;
    align-items: center;
    gap: 1px;
    border-top: var(--edge-width) solid var(--edge);
    padding-right: 5px;
    background: linear-gradient(#b8b8b8, #a4a4a4);
}

.corner .grip-wide {
    margin: -4px 0 0 -8px;
}

.menu-dot {
    width: 12px;
    height: 12px;
}

.lit {
    border: 1px solid #777;
    border-radius: 3px;
    background: #e4e4e4;
    color: #444;
}

/* Files Panel */
.files {
    width: 200px;
}

.tab-scroll {
    width: 161px;
    height: 4px;
    margin: 3px 0 3px 1px;
    border-radius: 2px;
    background: #a8a8a8;
    flex-shrink: 0;
}

.files .tab.back {
    --edge: #aaa;
    width: 42px;
    padding-left: 3px;
    border-left: none;
    border-radius: 0;
    border-bottom: 1px solid #d4d4d4;
    background: #8a8a8a;
}

.files .slope.back {
    --edge: #aaa;
    color: #8a8a8a;
    border-bottom: 1px solid #d4d4d4;
    background: #8a8a8a;
}

.files .tab.cut {
    flex: 1;
    width: 0;
    overflow: hidden;
}

.files .slope.flip {
    margin-left: -18px;
}

.files .panel-body {
    display: flex;
    flex-direction: column;
    min-height: 0;
    padding: 8px 1px 3px;
}

.file-tools {
    display: flex;
    gap: 6px;
    align-items: center;
    height: 22px;
    margin-bottom: 6px;
    padding: 0 9px 0 8px;
}

.options {
    gap: 2px;
    width: 24px;
    height: 20px;
    margin-left: auto;
}

.file-list {
    flex: 1;
    border: 1px solid #6c6c6c;
    background: #c2c2c2;
    list-style: none;
}

.file-list li {
    display: flex;
    gap: 3px;
    align-items: center;
    padding: 2px 0 0 24px;
}

.preview {
    display: flex;
    gap: 4px;
    align-items: center;
    height: 36px;
    padding-left: 8px;
    border-bottom: 1px solid #777;
}

.preview .lit {
    width: 24px;
    height: 21px;
}

.dim-play {
    margin: 0 10px 0 6px;
}

.volume {
    border-bottom: 1px dotted #111;
    color: #085c08;
    line-height: 13px;
}

.sort {
    display: flex;
    gap: 6px;
    align-items: center;
    height: 30px;
    padding-left: 4px;
}

.select-box {
    display: flex;
    width: 88px;
    height: 18px;
    border: 1px solid #5c5c5c;
    border-radius: 3px;
    background: linear-gradient(#a0a0a0, #b2b2b2);
}

.select-box select {
    flex: 1;
    padding-left: 4px;
    border: none;
    background: none;
    font: inherit;
    appearance: none;
}

.filters {
    display: flex;
    gap: 2px;
    height: 17px;
    padding-left: 5px;
}

.filters .lit {
    width: 23px;
}

.divider {
    width: 1px;
    background: #666;
}

.path-button {
    margin-left: 2px;
}

/* Main Panel */
.main-panel {
    --edge: #ffb400;
    --edge-width: 2px;
    flex: 1;
    min-width: 0;
    margin: 4px 0 -2px;
}

.main-panel .panel-head {
    height: 17px;
}

.main-panel .lead {
    width: 8px;
}

.main-panel .tab {
    width: 60px;
}

.main-panel .corner {
    border-right: 2px solid var(--edge);
}

.main-panel .panel-body {
    display: flex;
    flex-direction: column;
    min-height: 0;
    padding: 5px 5px 2px 7px;
    border: solid var(--edge);
    border-width: 0 2px 2px;
}

.view-bar {
    display: flex;
    justify-content: space-between;
    height: 12px;
    margin: 0 40px 3px 1px;
    padding: 1px 4px;
    border: 1px solid #555;
    border-radius: 3px;
    background: linear-gradient(#7effc0, #2ce090);
}

.view-bar span {
    width: 1px;
    background: #a8ffd4;
}

.view-bar .end {
    width: 4px;
    border-left: 1px dotted #000;
    border-right: 1px solid #a8ffd4;
    background: none;
}

.playhead-row {
    display: flex;
    justify-content: flex-end;
    height: 6px;
    padding: 1px 43px 0 0;
}

.display {
    display: grid;
    flex: 1;
    grid-template: 1fr 18px / 1fr 39px;
    min-height: 0;
    padding: 2px 0 0 1px;
    border: 1px solid #777;
    border-radius: 3px;
    background: #4b4b4b;
}

.channels {
    display: flex;
    flex-direction: column;
    gap: 2px;
    min-height: 0;
    border-right: 1px solid #aaa;
}

.channel {
    position: relative;
    flex: 1;
    min-height: 0;
    border-bottom: 1px solid #aaa;
    background: #000;
}

.channel > svg:first-child {
    width: 100%;
    height: 100%;
}

.channel path,
.amplitude path,
.time-ruler path,
.levels .panel-body path {
    vector-effect: non-scaling-stroke;
}

.grid-line,
.zero-line,
.limit-line,
.cursor-line {
    shape-rendering: crispEdges;
}

.grid-line {
    stroke: #003a00;
}

.zero-line {
    stroke: #a80000;
}

.limit-line {
    stroke: #fff;
}

.wave {
    fill: none;
    stroke: #4dffb0;
    stroke-linejoin: round;
}

.cursor-line {
    stroke: #ff0;
    stroke-dasharray: 1 3;
}

.fade {
    position: absolute;
    top: 9px;
}

.fade.in {
    left: 10px;
}

.fade.out {
    right: 11px;
}

.amplitude {
    display: flex;
    min-height: 0;
    color: #e0e0e0;
    font: 10px/14px "Roboto", "Noto Sans CJK SC", sans-serif;
}

.amplitude svg {
    width: 6px;
    height: 100%;
}

.amp-labels {
    display: flex;
    flex-direction: column;
}

.amp-labels span {
    display: flex;
    align-items: center;
    min-height: 0;
}

.amp-labels .top {
    align-items: flex-start;
}

.tick {
    stroke: #e0e0e0;
}

.time-ruler {
    min-width: 0;
    color: #e0e0e0;
    font: 10px/12px "Roboto", sans-serif;
}

.time-ruler svg,
.levels .panel-body > svg {
    width: 100%;
    height: 4px;
}

.time-labels {
    display: flex;
}

.time-labels span {
    flex: 362 1 0;
    width: 0;
    text-align: center;
}

.time-labels .first {
    flex-grow: 510;
    padding-left: 2px;
    text-align: left;
}

.time-labels .last {
    flex-grow: 332;
}

/* Lower Panels */
.lower {
    display: flex;
    gap: 6px;
    height: 93px;
    padding-top: 8px;
    flex-shrink: 0;
}

.transport {
    flex: 670;
}

.time {
    flex: 118;
}

.zoom {
    flex: 139;
}

.selection {
    flex: 418;
}

.transport-buttons {
    display: flex;
    gap: 2px;
    padding: 6px 5px;
}

.transport-buttons button {
    width: 28px;
    height: 25px;
    border: 1px solid #5a5a5a;
    border-radius: 3px;
    background: linear-gradient(#b4b4b4, #929292);
    color: #444;
}

.transport-buttons button:disabled {
    border-color: #828282;
    opacity: 0.7;
}

.transport-buttons svg {
    width: 16px;
    height: 14px;
    fill: #444;
}

.transport-buttons .record svg {
    fill: #c22020;
}

.clock {
    display: flex;
    align-items: center;
    justify-content: flex-end;
    padding: 3px 13px 0 0;
    color: #111;
    font: 21px "Liberation Sans", sans-serif;
}

.zoom-buttons {
    display: grid;
    grid-template-columns: repeat(4, 30px);
    grid-auto-rows: 27px;
    align-content: start;
    padding: 5px 0 0 4px;
}

.zoom-buttons svg {
    width: 18px;
    height: 18px;
    overflow: visible;
}

.zoom-buttons button:disabled {
    opacity: 0.45;
}

.zoom-buttons .split {
    border-left: 1px solid #666;
}

.selection table {
    margin-left: 2px;
    border-spacing: 2px 1px;
}

.selection th {
    height: 18px;
    padding: 0 1px;
    font-weight: normal;
    text-align: left;
}

.selection th + th,
.selection td + th {
    padding-left: 6px;
}

.selection input {
    display: block;
    width: 72px;
    height: 18px;
    margin: 0 0 1px 1px;
    padding: 0 4px 0 0;
    border: 1px solid #5c5c5c;
    border-radius: 3px;
    background: #e6e6e6;
    font: 11px "Liberation Sans", sans-serif;
    text-align: center;
}

/* Levels */
.levels {
    height: 78px;
    padding: 8px 0 3px;
    flex-shrink: 0;
}

.levels .panel-body {
    padding: 2px 3px 0;
}

.meter {
    display: flex;
    gap: 2px;
    height: 31px;
    border: solid #555;
    border-width: 2px 0 0 1px;
    border-bottom: 1px solid #ddd;
}

.bars {
    flex: 1;
    border-left: 1px solid #ff0;
    background: #000;
}

.clip {
    display: flex;
    flex-direction: column;
    gap: 1px;
    width: 10px;
    background: #ddd;
}

.clip span {
    flex: 1;
    background: #000;
}

.db-tick {
    stroke: #111;
}

.db-labels {
    display: flex;
    font: 10px/12px "Roboto", sans-serif;
}

.db-labels span {
    flex: 56 1 0;
    width: 0;
    text-align: center;
}

.db-labels .first {
    flex-grow: 29;
    text-align: left;
}

.db-labels .last {
    flex-grow: 30;
    padding-right: 10px;
    text-align: right;
}

/* Status Bar */
.statusbar {
    display: flex;
    height: 21px;
    background: linear-gradient(#dadada, #a0a0a0);
    font: 12px/20px "Roboto", "Noto Sans CJK SC", sans-serif;
    white-space: nowrap;
    flex-shrink: 0;
}

.statusbar span {
    padding-left: 6px;
    border-right: 1px solid #d8d8d8;
}

.statusbar .done {
    flex: 1;
    padding-left: 5px;
    border: none;
}

.statusbar .level {
    width: 132px;
    padding-left: 0;
}

.statusbar .format {
    width: 133px;
}

.statusbar .size {
    width: 77px;
    padding-left: 9px;
}

.statusbar .space {
    width: 102px;
}

.statusbar .remain {
    width: 110px;
}

.statusbar .empty {
    width: 74px;
}

.statusbar .mode {
    width: 52px;
    border: none;
}

/* Taskbar */
.taskbar {
    display: flex;
    gap: 2px;
    height: 40px;
    border-top: 1px solid #4c5a6c;
    background: linear-gradient(90deg, #8093a9 0, #8c9fb6 60px, #a6bfdc 120px, #a6bfdc 860px, #8297b0 885px, #8297b0);
    flex-shrink: 0;
}

.taskbar > button {
    width: 60px;
}

.taskbar > .start {
    width: 57px;
    padding-right: 3px;
}

.taskbar .running {
    border: 1px solid #5a6d88;
    border-radius: 3px;
    background: linear-gradient(135deg, #dce8f4, #b2c8e0 50%, #a9c1dd);
    box-shadow: inset 0 0 0 1px rgba(255, 255, 255, 0.6);
}

.taskbar .active {
    background: linear-gradient(135deg, #fff, #dfe7f1 50%, #e8eef6);
}

.taskbar .stack {
    width: 56px;
    box-shadow: inset 0 0 0 1px rgba(255, 255, 255, 0.6), 3px 0 0 #c5d6e8, 4px 0 0 #5a6d88;
}

.au {
    width: 28px;
    height: 27px;
    margin-top: -4px;
    background: linear-gradient(135deg, #6097a2, #28525e);
    color: #fff;
    font: 600 15px/26px "Noto Sans", sans-serif;
}

.spacer {
    flex: 1;
}

.tray {
    display: flex;
    gap: 8px;
    align-items: center;
    color: #fff;
}

.wifi {
    margin: 0 3px 0 7px;
}

.power {
    margin-left: 23px;
}

.sun {
    margin-left: 24px;
}

.weather {
    display: flex;
    flex-direction: column;
    gap: 3px;
    width: 52px;
    margin: 0 21px 0 -5px;
    text-align: center;
    white-space: nowrap;
}

.taskbar .show-desktop {
    width: 14px;
    border: 1px solid #46566a;
    background: linear-gradient(135deg, #a8b8cc, #6c8098 50%, #7a8ea6);
}
```
FILE: script.js
```js
const SVG_NS = "http://www.w3.org/2000/svg";

// Panel header ends
const headEnd = document.getElementById("head-end");
document.querySelectorAll(".panel-head").forEach(head => {
    head.appendChild(headEnd.content.cloneNode(true));
});

function addPath(svg, cls, d) {
    const path = document.createElementNS(SVG_NS, "path");
    path.setAttribute("class", cls);
    path.setAttribute("d", d);
    svg.appendChild(path);
}

// First six voice periods, [x, amplitude]
const opening = [
    [0,-3],[7,-3],[8,6],[9,14],[11,3],[13,9],[15,-5],[16,-7],[17,-3],[19,-7],[21,6],[23,5],[26,7],[28,-4],[30,-3],[32,-7],[35,2],[38,7],[41,-1],[44,-5],[48,1],[51,3],[54,-2],[57,-3],[63,0],[66,0],[69,-3],[72,-8],
    [74,20],[76,3],[78,10],[79,-6],[81,-12],[83,-3],[85,-4],[87,13],[89,1],[91,2],[93,-10],[96,0],[100,8],[103,-3],[107,-4],[110,4],[113,2],[116,-4],[119,0],[122,1],[125,-2],[129,0],[134,0],[137,-7],[139,-5],
    [141,23],[143,-1],[145,3],[146,-8],[148,-13],[151,7],[152,3],[154,12],[157,-10],[160,-4],[164,10],[166,-2],[170,-7],[174,7],[176,5],[180,-6],[184,3],[189,-3],[193,2],[199,-4],[202,2],[205,-5],[207,-6],
    [209,24],[211,-3],[213,0],[216,-11],[219,12],[221,3],[222,4],[225,-11],[229,5],[232,5],[236,-8],[242,9],[244,-5],[246,-4],[251,5],[254,-5],[260,1],[265,-2],[270,0],[274,-9],
    [277,32],[278,-4],[280,-10],[282,-4],[284,-11],[287,18],[289,-7],[292,-5],[294,-7],[297,11],[301,-6],[303,-5],[307,8],[312,-7],[316,4],[321,-4],[325,2],[329,-2],[333,2],[336,-3],[338,1],[342,-12],
    [344,38],[346,0],[347,-18],[350,5],[352,-10],[354,19],[358,-16],[360,0],[365,11],[368,-11],[370,3],[373,1],[375,7],[379,-7],[382,4],[388,-4],[391,3],[395,-2],[400,2],[404,-3],[407,-11]
];

// Later periods share one shape: [peak x, peak height, tail scale]
const burst = [[-5,-3],[-3,-8],[0,0],[4,-24],[7,12],[10,-6],[12,11],[15,-14],[18,13],[21,-6],[24,-2],[25,-5],[29,9],[32,-9],[35,6],[39,-4],[42,1],[44,-1],[46,-2],[50,2],[54,-2]];
const bursts = [[410,34,.9],[475,34,1],[540,36,1],[604,33,1],[668,35,1.05],[732,34,1.05],[795,31,1],[857,30,.95],[918,28,.85],[979,23,.75],[1038,21,.75]];

function voicePath() {
    const points = opening.slice();
    bursts.forEach(([x, peak, scale]) => {
        burst.forEach(([dx, y]) => points.push([x + dx, dx === 0 ? peak : y * scale]));
    });
    points.push([1091,-3],[1093,-9],[1096,19],[1098,12],[1099,-15],[1100,-4]);

    // Ease between neighbouring samples
    let [px, py] = points[0];
    let d = `M${px} ${102.5 - py}`;
    points.slice(1).forEach(([x, y]) => {
        const mid = (px + x) / 2;
        d += `C${mid} ${102.5 - py} ${mid} ${102.5 - y} ${x} ${102.5 - y}`;
        px = x;
        py = y;
    });
    return d;
}

// Glottal signal, [dx, amplitude] from the foot of each pulse
const pulse = [[0,-12],[2,0],[4,15],[5,18],[8,18],[14,15],[19,11],[24,7],[32,2],[34,0],[36,-7],[40,-11],[46,-11],[57,-12]];
const feet = [-1,65,131,198,267,333,401,467,531,595,660,724,786,849,910,970,1029,1087,1146];

function pulsePath() {
    const points = [];
    for (let i = 0; i < feet.length - 1; i++) {
        const stretch = (feet[i + 1] - feet[i]) / 67;
        const gain = 1 + i * 0.018;
        pulse.forEach(([dx, y]) => points.push([feet[i] + dx * stretch, y > 0 ? y * gain : y]));
        points.push([feet[i + 1] - 1, -12]);
    }
    return "M" + points.map(([x, y]) => `${x.toFixed(1)} ${(102.5 - y).toFixed(1)}`).join("L");
}

function drawChannel(id, wave) {
    const svg = document.getElementById(id);
    let grid = "";
    for (let i = 0; i <= 30; i++) grid += `M${i * 36.2 + 0.5} 0V206`;
    [-3, -2, -1, 1, 2, 3].forEach(i => grid += `M0 ${102.5 + i * 31.2}H1100`);
    addPath(svg, "grid-line", grid);
    addPath(svg, "zero-line", "M0 102.500H1100");
    addPath(svg, "limit-line", "M0 10.500H1100M0 194.500H1100");
    addPath(svg, "wave", wave);
    addPath(svg, "cursor-line", "M1092.500 0V206");
}

drawChannel("wave-left", voicePath());
drawChannel("wave-right", pulsePath());

// Rulers
function addLabels(id, labels) {
    const box = document.getElementById(id);
    labels.forEach((text, i) => {
        const span = document.createElement("span");
        span.textContent = text;
        if (i === 0) span.className = "first";
        if (i === labels.length - 1) span.className = "last";
        box.appendChild(span);
    });
    return box;
}

const times = ["hms"];
for (let ms = 10; ms <= 145; ms += 5) times.push((ms / 1000).toFixed(3));
times.push("hms");
addLabels("time-labels", times);

let ticks = "";
for (let i = 0; i <= 151; i++) ticks += `M${(i * 7.24 + 0.5).toFixed(1)} 0V${i % 5 ? 2 : 5}`;
addPath(document.getElementById("time-ticks"), "tick", ticks);

const amps = ["采样", 20000, 10000, 0, -10000, -20000, -30000, 30000, 20000, 10000, 0, -10000, -20000, "采样"];
const ampHeights = [25, 31, 31, 31, 31, 31, 31, 23, 31, 31, 31, 31, 31, 25];
const ampBox = addLabels("amp-labels", amps);
[...ampBox.children].forEach((span, i) => {
    span.style.flex = `${ampHeights[i]} 1 0`;
    if (i === 0 || i === 7) span.classList.add("top");
});

ticks = "";
[102.5, 312.5].forEach(zero => {
    for (let i = -16; i <= 16; i++) ticks += `M0 ${(zero + i * 6.24).toFixed(1)}H${i % 5 ? 1 : 4}`;
});
addPath(document.getElementById("amp-ticks"), "tick", ticks);

const levels = ["dB"];
for (let db = -69; db <= 0; db += 3) levels.push(db);
addLabels("db-labels", levels);

ticks = "";
for (let i = 0; i <= 72; i++) ticks += `M${(i * 18.67 + 1.5).toFixed(1)} 0V${i % 3 ? 2 : 4}`;
addPath(document.getElementById("db-ticks"), "db-tick", ticks);
```
